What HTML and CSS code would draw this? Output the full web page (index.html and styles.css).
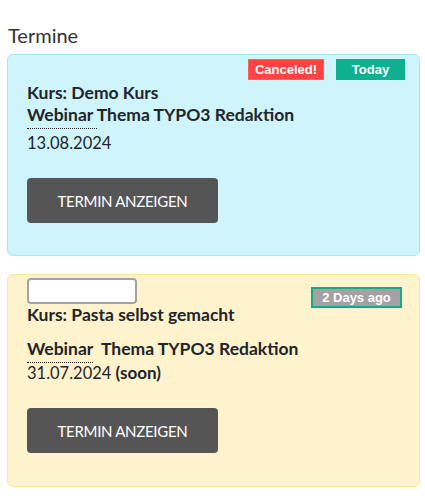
FILE: index.html
```html
<!DOCTYPE html>
<html lang="de">
<head>
<meta charset="utf-8">
<link rel="stylesheet" href="styles.css">
</head>
<body>
<div class="page">
  <h2 class="title">Termine</h2>

  <div class="card card-info">
    <div class="card-head head-info">
      <div class="badges">
        <span class="badge badge-canceled">Canceled!</span>
        <span class="badge badge-today">Today</span>
      </div>
    </div>
    <div class="line course">Kurs: Demo Kurs</div>
    <div class="line topic"><abbr class="type">Webinar&nbsp;</abbr>Thema TYPO3 Redaktion</div>
    <div class="line date date-info">13.08.2024</div>
    <a class="btn btn-info" href="#">TERMIN ANZEIGEN</a>
  </div>

  <div class="card card-warn">
    <div class="card-head head-warn">
      <span class="field"></span>
      <span class="badge badge-past">2 Days ago</span>
    </div>
    <div class="line course">Kurs: Pasta selbst gemacht</div>
    <div class="line topic topic-warn"><abbr class="type">Webinar</abbr> &nbsp;Thema TYPO3 Redaktion</div>
    <div class="line date date-warn">31.07.2024 <b class="soon">(soon)</b></div>
    <a class="btn btn-warn" href="#">TERMIN ANZEIGEN</a>
  </div>
</div>
</body>
</html>
```

FILE: styles.css
```css
* { box-sizing: border-box; }
html, body { margin: 0; padding: 0; background: #fff; }
body {
  font-family: Lato, "Noto Sans", sans-serif;
  color: #212529;
}
.page {
  padding: 23px 5px 0 7px;
}
.title {
  margin: 0 0 7px 1px;
  font-size: 20px;
  line-height: 24px;
  font-weight: 400;
  color: #333;
}
.card {
  border: 1px solid;
  border-radius: 6px;
  padding: 0 14px 32px 19px;
  margin-bottom: 18px;
}
.card-info { background: #cff4fc; border-color: #9eeaf9; }
.card-warn { background: #fff3cd; border-color: #ffe69c; padding-bottom: 33px; }

.card-head {
  display: flex;
  align-items: flex-start;
  justify-content: space-between;
}
.head-info { height: 27px; padding-top: 4px; }
.head-warn { height: 29px; padding-top: 3px; }
.badges { display: flex; gap: 12px; margin-left: auto; }
.badge {
  display: inline-block;
  height: 21px;
  line-height: 21px;
  font-family: "Liberation Sans", Arial, sans-serif;
  font-weight: 700;
  font-size: 13px;
  color: #fff;
  text-align: center;
}
.badge-canceled {
  background: #ff4343;
  border: 1px solid #ff5f5f;
  line-height: 19px;
  width: 76px;
}
.badge-today {
  background: #0db18f;
  width: 69px;
}
.badge-past {
  background: #a2a2a2;
  border: 2px solid #14ab8b;
  line-height: 17px;
  width: 91px;
  margin-top: 9px;
  margin-right: 3px;
}
.field {
  display: block;
  width: 110px;
  height: 26px;
  background: #fff;
  border: 2px solid #a3a3a3;
  border-radius: 4px;
}
.line {
  font-size: 17.5px;
  line-height: 22px;
}
.course { font-weight: 700; }
.topic { font-weight: 700; }
.topic-warn { margin-top: 12px; }
.type {
  text-decoration: none;
  border-bottom: 1px dotted #222;
  padding-bottom: 3px;
}
.date { font-size: 16.5px; }
.soon { font-size: 17px; }
.date-info { margin-top: 6px; }
.date-warn { margin-top: 2px; }
.btn {
  display: flex;
  align-items: center;
  justify-content: center;
  width: 191px;
  height: 45px;
  background: #555;
  border-radius: 4px;
  color: #fff;
  text-decoration: none;
  font-size: 15px;
  letter-spacing: -0.3px;
}
.btn-info { margin-top: 24px; }
.btn-warn { margin-top: 24px; }
```
